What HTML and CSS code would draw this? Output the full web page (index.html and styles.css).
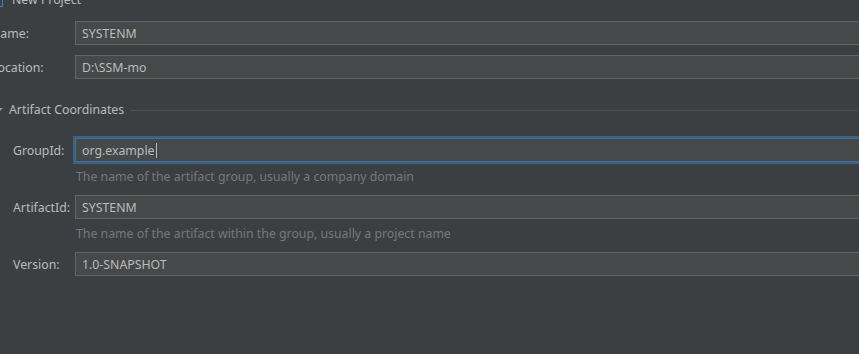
FILE: index.html
```html
<!DOCTYPE html>
<html lang="en">
<head>
    <meta charset="UTF-8">
    <meta name="viewport" content="width=device-width, initial-scale=1.0">
    <title>New Project</title>
    <link rel="stylesheet" href="styles.css">
</head>
<body>
    <div class="dialog">
        <div class="titleRow">
            <span class="treeIcon"></span>
            <span class="titleText">New Project</span>
        </div>

        <div class="form topForm">
            <div class="row">
                <label class="label">Name:</label>
                <div class="field">SYSTENM</div>
            </div>
            <div class="row">
                <label class="label">Location:</label>
                <div class="field">D:\SSM-mo</div>
            </div>
        </div>

        <div class="sectionTitle">
            <svg class="arrow" width="8" height="6" viewBox="0 0 8 6"><path d="M0 1 L8 1 L4 5 Z" fill="#9a9da0"/></svg>
            <span>Artifact Coordinates</span>
            <div class="rule"></div>
        </div>

        <div class="form coords">
            <div class="row">
                <label class="label">GroupId:</label>
                <div class="field focused">org.example<span class="caret"></span></div>
            </div>
            <p class="hint">The name of the artifact group, usually a company domain</p>
            <div class="row">
                <label class="label">ArtifactId:</label>
                <div class="field">SYSTENM</div>
            </div>
            <p class="hint">The name of the artifact within the group, usually a project name</p>
            <div class="row">
                <label class="label">Version:</label>
                <div class="field">1.0-SNAPSHOT</div>
            </div>
        </div>
    </div>
</body>
</html>
```

FILE: styles.css
```css
html, body {
    margin: 0;
    padding: 0;
    height: 100%;
    overflow: hidden;
    background-color: #3c3f41;
}
body {
    font-family: 'Noto Sans', 'Open Sans', Arial, sans-serif;
    font-size: 12.3px;
    color: #bbbbbb;
}
.dialog {
    margin-right: -6px;
}
.titleRow {
    display: flex;
    align-items: center;
    height: 16px;
    margin-top: -8px;
}
.treeIcon {
    width: 10px;
    height: 13px;
    margin-left: -7px;
    border: 1px solid #3d7bd8;
    box-sizing: border-box;
}
.titleText {
    margin-left: 9px;
    line-height: 16px;
}
.form {
    display: flex;
    flex-direction: column;
}
.topForm {
    margin-top: 13px;
    margin-left: -9px;
    gap: 10px;
}
.row {
    display: flex;
    align-items: center;
    height: 24px;
}
.label {
    flex: 0 0 auto;
}
.topForm .label {
    width: 84px;
}
.coords {
    margin-top: 20px;
    padding-left: 13px;
}
.coords .label {
    width: 62px;
}
.field {
    flex: 1;
    height: 24px;
    box-sizing: border-box;
    padding-left: 6px;
    line-height: 23px;
    background-color: #45494a;
    border: 1px solid #646464;
    border-right: none;
    white-space: nowrap;
}
.field.focused {
    border-color: #466d94;
    box-shadow: 0 0 0 2px #3d6185;
}
.caret {
    display: inline-block;
    width: 1px;
    height: 15px;
    margin-left: 1px;
    vertical-align: -3px;
    background-color: #bbbbbb;
}
.hint {
    margin: 6px 0 10px 63px;
    line-height: 17px;
    color: #787878;
}
.sectionTitle {
    display: flex;
    align-items: center;
    height: 16px;
    margin-top: 23px;
}
.arrow {
    margin-left: -5px;
}
.sectionTitle span {
    margin-left: 6px;
    line-height: 16px;
}
.rule {
    flex: 1;
    height: 1px;
    margin-left: 6px;
    background-color: #515151;
}
```
